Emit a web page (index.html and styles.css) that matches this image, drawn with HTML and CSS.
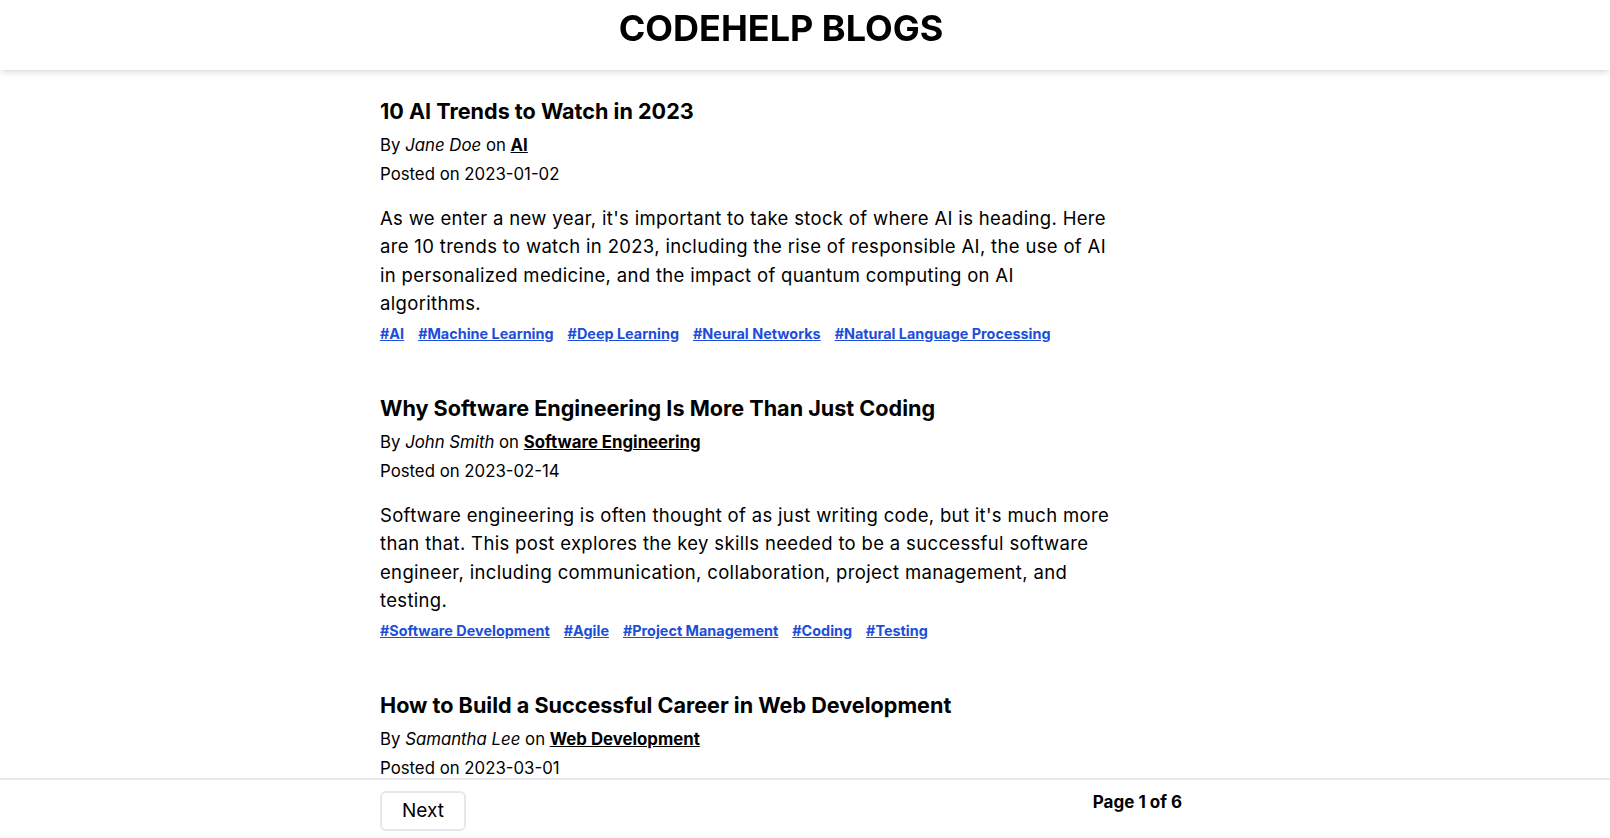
FILE: index.html
```html
<!DOCTYPE html>
<html lang="en">
<head>
<meta charset="utf-8">
<title>Codehelp Blogs</title>
<link rel="stylesheet" href="styles.css">
</head>
<body>
<header class="site-header">
  <h1 class="brand">CODEHELP BLOGS</h1>
</header>

<main class="page">
  <div class="posts">
    <article class="post">
      <h2 class="post-title">10 AI Trends to Watch in 2023</h2>
      <p class="post-meta">By <em>Jane Doe</em> on <a class="category" href="#">AI</a></p>
      <p class="post-date">Posted on 2023-01-02</p>
      <p class="post-body">As we enter a new year, it's important to take stock of where AI is heading. Here are 10 trends to watch in 2023, including the rise of responsible AI, the use of AI in personalized medicine, and the impact of quantum computing on AI algorithms.</p>
      <div class="tags">
        <a href="#">#AI</a>
        <a href="#">#Machine Learning</a>
        <a href="#">#Deep Learning</a>
        <a href="#">#Neural Networks</a>
        <a href="#">#Natural Language Processing</a>
      </div>
    </article>

    <article class="post">
      <h2 class="post-title">Why Software Engineering Is More Than Just Coding</h2>
      <p class="post-meta">By <em>John Smith</em> on <a class="category" href="#">Software Engineering</a></p>
      <p class="post-date">Posted on 2023-02-14</p>
      <p class="post-body">Software engineering is often thought of as just writing code, but it's much more than that. This post explores the key skills needed to be a successful software engineer, including communication, collaboration, project management, and testing.</p>
      <div class="tags">
        <a href="#">#Software Development</a>
        <a href="#">#Agile</a>
        <a href="#">#Project Management</a>
        <a href="#">#Coding</a>
        <a href="#">#Testing</a>
      </div>
    </article>

    <article class="post">
      <h2 class="post-title">How to Build a Successful Career in Web Development</h2>
      <p class="post-meta">By <em>Samantha Lee</em> on <a class="category" href="#">Web Development</a></p>
      <p class="post-date">Posted on 2023-03-01</p>
      <p class="post-body">Web development is a fast-growing field with plenty of opportunities. This post covers the skills you need, the tools to learn, and the habits that help you grow from a beginner into a confident, job-ready web developer.</p>
      <div class="tags">
        <a href="#">#Web Development</a>
        <a href="#">#Career</a>
        <a href="#">#Frontend</a>
        <a href="#">#Backend</a>
      </div>
    </article>
  </div>
</main>

<footer class="pager">
  <div class="pager-inner">
    <button class="next-btn" type="button">Next</button>
    <p class="page-count">Page 1 of 6</p>
  </div>
</footer>
</body>
</html>
```

FILE: styles.css
```css
html, body {
  margin: 0;
  padding: 0;
}

body {
  font-family: Inter, "Noto Sans", "Liberation Sans", sans-serif;
  color: #000;
  background: #fff;
  padding-right: 48px;
}

.site-header {
  position: fixed;
  top: 0;
  left: 0;
  right: 0;
  height: 70px;
  box-sizing: border-box;
  padding: 6px 48px 0 0;
  background: #fff;
  text-align: center;
  box-shadow: 0 4px 6px -1px rgba(0, 0, 0, 0.1), 0 2px 4px -2px rgba(0, 0, 0, 0.1);
  z-index: 10;
}

.brand {
  margin: 0;
  font-size: 36px;
  line-height: 45px;
  font-weight: 700;
}

.page {
  width: 802px;
  margin: 0 auto;
  padding-top: 97px;
  padding-bottom: 90px;
}

.posts {
  display: flex;
  flex-direction: column;
  gap: 50.5px;
  max-width: 731px;
}

.post-title {
  margin: 0 0 6px;
  font-size: 21.6px;
  line-height: 28px;
  font-weight: 700;
}

.post-meta,
.post-date {
  margin: 0;
  font-size: 16.8px;
  line-height: 28.5px;
}

.category {
  color: inherit;
  font-weight: 700;
  text-decoration: underline;
}

.post-body {
  margin: 15.5px 0 6px;
  font-size: 18.5px;
  letter-spacing: 0.33px;
  line-height: 28.5px;
}

.tags {
  display: flex;
  flex-wrap: wrap;
  gap: 0 14px;
  font-size: 14.4px;
  line-height: 20px;
  font-weight: 700;
}

.tags a {
  color: #1d4ed8;
  text-decoration: underline;
}

.pager {
  position: fixed;
  left: 0;
  right: 0;
  bottom: 0;
  height: 60px;
  box-sizing: border-box;
  padding-right: 48px;
  background: #fff;
  border-top: 2px solid #e5e7eb;
  z-index: 10;
}

.pager-inner {
  width: 802px;
  margin: 0 auto;
  padding-top: 11px;
  display: flex;
  justify-content: space-between;
  align-items: flex-start;
}

.next-btn {
  height: 40px;
  box-sizing: border-box;
  padding: 0 20px;
  border: 2px solid #e5e7eb;
  border-radius: 6px;
  background: #fff;
  color: #000;
  font-family: inherit;
  font-size: 19px;
  line-height: 36px;
  cursor: pointer;
}

.page-count {
  margin: 0;
  font-size: 17px;
  line-height: 22px;
  font-weight: 700;
}
```
